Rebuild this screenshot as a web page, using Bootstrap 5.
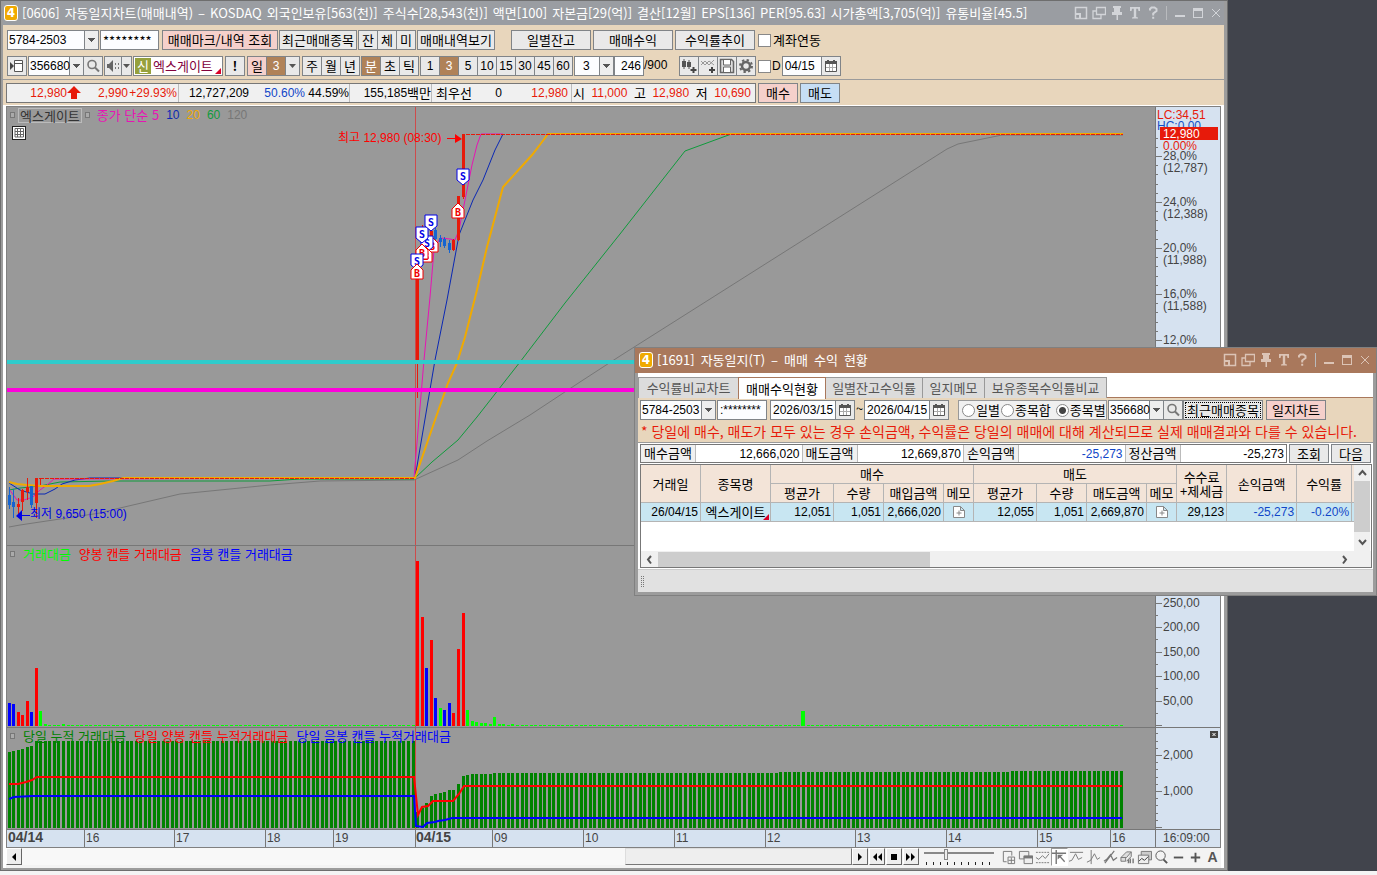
<!DOCTYPE html>
<html lang="ko">
<head>
<meta charset="utf-8">
<meta name="viewport" content="width=device-width, initial-scale=1">
<title>자동일지차트</title>
<link rel="stylesheet" href="https://cdn.jsdelivr.net/npm/bootstrap@5.3.0/dist/css/bootstrap.min.css">
<style>
:root{--beige:#e8d6bc;--line:#808488;--axis:#d6e2f0;--plot:#999;--red:#e71a0a;--blue:#1046c8;--wood:#b08258}
html,body{height:100%}
body{margin:0;overflow:hidden;background:#41444c;color:#000;font:13px/18px "Noto Sans CJK KR",sans-serif;border-bottom:4px solid #f4f4f4}
.desk{height:100%}
.main-win{height:100%;width:calc(100% - 149px);background:#fff;border:3px solid #9c9c9c;border-right-width:4px;border-top:1px solid #6b6b6b;outline:1px solid #6e6e6e;outline-offset:-1px}
.title-bar{height:24px;background:#9a9da2;color:#fff;line-height:24px;white-space:nowrap;flex:none}
.title-text{gap:5px;margin-left:4px}
.brand{width:14px;height:16px;border:1px solid #fff;border-radius:3px;background:#f0aa00;color:#fff;font:bold 12px/14px "DejaVu Sans",sans-serif;text-align:center}
.win-btns{margin-right:-1px}
.win-btn{width:18px;height:22px;padding:0;border:0;background:none;color:#d2d4d8;display:flex;align-items:center;justify-content:center}
.win-btn svg{width:14px;height:14px}
.win-sep{width:1px;height:14px;background:#b9bbbe;margin:0 4px}
.tools{background:var(--beige);height:54px;padding:5px 0 0 4px;flex:none;white-space:nowrap}
.tool-row+.tool-row{margin-top:6px}
.ui,.btn.ui{height:20px;padding:0;border:1px solid var(--line);border-radius:0;background:#e9e9e9;color:#000;font:inherit;line-height:18px;text-align:center;display:block;flex:none}
.num,.ui.num,.btn.ui.num{font-family:"Liberation Sans","Noto Sans CJK KR",sans-serif;font-size:12px}
.btn.ui svg{display:block;margin:auto}
.btn.ui.pink{background:#f5d0cb}
.btn.ui.sky{background:#c6def5}
.btn.ui.wood{background:var(--wood);color:#fff}
.btn.ui.focused{outline:1px dotted #000;outline-offset:-3px}
.ui.field{background:#fcfdff;text-align:left;padding:0 2px}
input.ui.right{text-align:right}
select.ui.field{appearance:none;background:#fcfdff url("data:image/svg+xml,%3Csvg xmlns='http://www.w3.org/2000/svg' width='14' height='18'%3E%3Cpath d='M0 0h14v18H0z' fill='%23eee'/%3E%3Cpath d='M0 0h1v18H0z' fill='%23808488'/%3E%3Cpath d='M4 7h7v1h-1v1H9v1H8v1H7v-1H6V9H5V8H4z' fill='%23555'/%3E%3C/svg%3E") no-repeat right top;padding:0 12px 0 1px}
select.ui.lead-in{padding-left:8px}
.grp{display:flex}
.grp>*+*{margin-left:-1px}
.w11{width:11px}.w15{width:15px}.w18{width:18px}.w20{width:20px}.w30{width:30px}.w34{width:34px}.w40{width:40px}.w47{width:47px}.w49{width:49px}.w50{width:50px}.w56{width:56px}.w59{width:59px}.w60{width:60px}.w66{width:66px}.w70{width:70px}.w76{width:76px}.w78{width:78px}.w80{width:80px}.w90{width:90px}.w92{width:92px}.w116{width:116px}
.g1{gap:1px}.g2{gap:2px}.g3{gap:3px}.far{margin-left:13px}.near{margin-left:1px}
.tick{appearance:none;width:13px;height:13px;margin:0;border:1px solid #888;background:#fff;flex:none}
.tick.round{border-radius:50%}
.tick.round:checked{background:radial-gradient(circle,#444 0 3px,#fff 4px)}
.new-tag{background:#96a03c;color:#fff;width:16px;height:16px;line-height:16px;margin:1px 2px 0 0}
.ui.stock{color:#82003c;background:#fff;position:relative;text-align:left;padding-left:1px}
.corner{position:absolute;right:1px;bottom:1px;border:3px solid transparent;border-right-color:#d80028;border-bottom-color:#d80028}
.quotes{background:var(--beige);border-top:1px solid #9b9b9b;height:26px;padding:3px 0 0 3px;flex:none}
.quote-bar{width:750px;height:20px;border:1px solid #777;background:#f0f0f0;white-space:nowrap}
.quote-bar>div{display:flex;border-right:1px solid #bbb;flex:none}
.quote-bar>div:last-child{border:0}
.q1{width:172px}.q2{width:171px}.q3{width:82px}.q4{width:140px}.q5{width:183px}
.red{color:var(--red)}.blue{color:var(--blue)}
.chart{margin:1px 3px 0 3px;border:1px solid #808080;background:var(--plot);min-height:0}
.pane{display:flex;min-height:0;border-bottom:1px solid #777;position:relative}
.pane svg{display:block;height:100%}
.plot{flex:1 1 0;min-width:0;width:0}
.scale{width:65px;flex:none;background:var(--axis)}
.p-price{flex:438 1 0}.p-vol{flex:181 1 0}.p-sum{flex:101 1 0}
.times{height:17px;flex:none;border:0}
.times svg{background:var(--axis)}
.legends{position:absolute;left:3px;top:0;line-height:16px;white-space:nowrap;display:flex;align-items:center;gap:8px}
.legends.tight{gap:3px}
.knob{width:5px;height:6px;border:1px solid #777;background:#aaa}
.tagbox{border:1px solid #bbb;color:#333;line-height:13px;padding:0 1px;height:15px}
.ma5{color:#e614b4}.ma10{color:#0a28b4}.ma20{color:#f0aa00}.ma60{color:#0f9b3c}.ma120{color:#777}
.lime{color:#0f0}.up{color:red}.down{color:#00f}.total{color:#008200}
.pane svg text{font-family:"Liberation Sans","Noto Sans CJK KR",sans-serif;font-size:12px}
.pane svg text.day{font-size:14px;font-weight:bold}
.pane svg text.pin{font:bold 10px "DejaVu Sans Mono",monospace}
.bars-foot{height:20px;margin:0 3px;flex:none;background:#f3f3f3}
.sq{width:16px;height:17px;padding:0;border:1px solid #fff;border-right-color:#666;border-bottom-color:#666;background:#eee;flex:none;display:flex;align-items:center;justify-content:center}
.track{background:#f8f8f8;height:17px}
.thumb{width:227px;height:17px;background:#eee;border:1px solid #ddd;border-right-color:#777;border-bottom-color:#777}
.zoomer{appearance:none;width:70px;height:18px;margin:0 6px 0 5px;background:linear-gradient(#888,#888) 0 4px/100% 2px no-repeat,repeating-linear-gradient(90deg,#222 0 1px,transparent 1px 7px) 2px 14px/100% 3px no-repeat}
.zoomer::-webkit-slider-thumb{appearance:none;width:4px;height:11px;background:#eee;border:1px solid #888;margin-top:-6px}
.foot-ic{width:17px;height:18px;padding:0;border:0;background:none;color:#777;display:flex;align-items:center;justify-content:center;flex:none}
.foot-ic svg{width:15px;height:15px;flex:none}
.foot-ic.on{background:#fff;border:1px solid #999;border-right-color:#fff;border-bottom-color:#fff}
.foot-ic.letter{color:#555;font:bold 14px "Liberation Sans",sans-serif}
.sub-win{position:absolute;left:634px;right:0;top:347px;background:#fff;border:4px solid #9c9c9c;border-top:0;outline:1px solid #808080;outline-offset:-1px}
.sub-win .title-bar{background:#a9785c;height:26px;line-height:26px;margin:0 -4px;padding:0 4px 0 5px}
.sub-win .title-text{gap:6px}
.sub-win .win-btn{color:#dcc4b6}
.tabs-row{padding:4px 0 0 1px;border-bottom:1px solid #a9785c;height:25px}
.tab-b{height:21px;border:1px solid #999;border-bottom:0;background:#dcdcdc;color:#555;padding:0;margin-left:-1px;line-height:18px}
.tab-b.on{background:#fff;color:#000;border-color:#a9785c;height:22px;z-index:1}
.t1{width:101px}.t2{width:88px}.t3{width:98px}.t4{width:63px}.t5{width:123px}
.filter{background:var(--beige);padding:2px 0 0 2px;height:45px;border-bottom:1px solid #999;white-space:nowrap}
.tilde{width:9px;text-align:center}
.notice{font-size:14px;line-height:22px;color:var(--red);padding-left:1px}
.radios{width:149px;height:20px;border:1px solid #999;background:#f0f0f0;padding-left:3px;margin:0 1px 0 9px}
.sums{padding:1px 2px 0 2px;gap:2px}
.sum-box{border:1px solid #777;height:19px;line-height:16px;white-space:nowrap;flex:1 1 0}
.sum-box dt{font-weight:400;width:55px;background:#f0f0f0;border-right:1px solid #bbb;text-align:center;flex:none}
.sum-box dd{margin:0;flex:1 1 0;text-align:right;padding-right:2px;border-right:1px solid #bbb;line-height:18px}
.sum-box dd:last-child{border:0}
.sums .btn.ui{height:19px;line-height:16px}
.grid-box{margin:1px 1px 0 2px;border:1px solid #777}
.deal{table-layout:fixed;width:714px;border-collapse:separate;border-spacing:0;line-height:14px;white-space:nowrap}
.deal th,.deal td{border:1px solid #b4b4b4;border-top:0;border-left:0;padding:0 2px;height:19px;overflow:hidden}
.deal th{background:#f3e4d8;font-weight:400;text-align:center}
.deal td{background:#c8e6f2;text-align:right;position:relative}
.deal td.named{font:13px/14px "Noto Sans CJK KR",sans-serif}
.deal td.named,.deal td.mid{text-align:center}
.deal svg{display:block;margin:auto}
.blank{height:29px}
.sb{background:#f0f0f0;color:#555}
.sb-v{width:16px;flex:none;margin-right:1px}
.sb-v i{display:block;height:51px;background:#cdcdcd}
.sb-h{height:16px}
.sb-h i{width:272px;height:15px;background:#cdcdcd}
.sb-h .end{margin:0 18px 0 auto}
.status{background:#e1e1e1;border-top:1px solid #ccc;height:23px;margin-top:1px}
.grip{width:4px;height:12px;margin:5px 0 0 3px;background:repeating-linear-gradient(#e1e1e1 0 1px,transparent 1px 2px),repeating-linear-gradient(90deg,#777 0 1px,#e1e1e1 1px 2px)}
</style>
</head>
<body>
<svg class="d-none" aria-hidden="true">
 <symbol id="i-dock" viewBox="0 0 14 14"><path d="M1.500 1.500h11v11h-11z" fill="none" stroke="currentColor" stroke-width="1.500"/><path d="M1 7h6v6H5V9H1z" fill="currentColor"/></symbol>
 <symbol id="i-dup" viewBox="0 0 14 14"><path d="M4.500 1.500h9v7h-9zM4 5H1v7.500h8V9" fill="none" stroke="currentColor" stroke-width="1.300"/></symbol>
 <symbol id="i-pin" viewBox="0 0 14 14"><path d="M3 0h8v2h-1v4h2v3H8v5H6.500V9H2V6h2V2H3z" fill="currentColor"/></symbol>
 <symbol id="i-t" viewBox="0 0 14 14"><path d="M2 1h10v4h-1.500L10 2.800H8.200V11l1.800.6V12.500H4v-.9l1.800-.6V2.800H4L3.500 5H2z" fill="currentColor"/></symbol>
 <symbol id="i-q" viewBox="0 0 14 14"><path d="M4 4.500V3l1.500-1.500h3L10.500 3v2L7.200 7.500v2M7.200 10.800v2" fill="none" stroke="currentColor" stroke-width="2"/></symbol>
 <symbol id="i-min" viewBox="0 0 14 14"><path d="M2 9h10v2H2z" fill="currentColor"/></symbol>
 <symbol id="i-max" viewBox="0 0 14 14"><path d="M2 2h10v10H2zm1 3v6h8V5z" fill="currentColor" fill-rule="evenodd"/></symbol>
 <symbol id="i-x" viewBox="0 0 14 14"><path d="M3 3l8 8M11 3l-8 8" stroke="currentColor"/></symbol>
 <symbol id="i-mag" viewBox="0 0 14 14"><circle cx="6" cy="5.500" r="4" fill="none" stroke="#777" stroke-width="1.600"/><path d="M9 8.500l4 4" stroke="#777" stroke-width="2"/></symbol>
 <symbol id="i-cal" viewBox="0 0 12 12"><path d="M.5 1.500h11v10H.5z" fill="#fff" stroke="#555"/><path d="M1 7.500h10M4.500 4v7M7.500 4v7" stroke="#aaa"/><path d="M0 1h12v3H0zM2 0h2v2H2zM8 0h2v2H8z" fill="#555"/></symbol>
 <symbol id="i-note" viewBox="0 0 12 12"><path d="M.5.500h7l4 4v7H.5zM7.500.500v4h4" fill="#fff" stroke="#888"/><path d="M6 4.500v5M3.500 7h5" stroke="#888"/></symbol>
 <symbol id="i-drop" viewBox="0 0 7 4"><path d="M0 0h7L3.500 4z" fill="#555"/></symbol>
</svg>

<div class="desk position-relative">
<main class="main-win d-flex flex-column">
 <header class="title-bar d-flex align-items-center">
  <span class="brand near flex-shrink-0">4</span>
  <span class="title-text d-flex"><span>[0606]</span><span>자동일지차트(매매내역)</span><span>–</span><span>KOSDAQ</span><span>외국인보유[563(천)]</span><span>주식수[28,543(천)]</span><span>액면[100]</span><span>자본금[29(억)]</span><span>결산[12월]</span><span>EPS[136]</span><span>PER[95.63]</span><span>시가총액[3,705(억)]</span><span>유통비율[45.5]</span></span>
  <div class="win-btns d-flex align-items-center ms-auto">
   <button class="win-btn" aria-label="도킹"><svg><use href="#i-dock"/></svg></button><button class="win-btn" aria-label="복제"><svg><use href="#i-dup"/></svg></button><button class="win-btn" aria-label="고정"><svg><use href="#i-pin"/></svg></button><button class="win-btn" aria-label="글꼴"><svg><use href="#i-t"/></svg></button><button class="win-btn" aria-label="도움말"><svg><use href="#i-q"/></svg></button><span class="win-sep"></span><button class="win-btn" aria-label="최소화"><svg><use href="#i-min"/></svg></button><button class="win-btn" aria-label="최대화"><svg><use href="#i-max"/></svg></button><button class="win-btn" aria-label="닫기"><svg><use href="#i-x"/></svg></button>
  </div>
 </header>

 <section class="tools">
  <div class="tool-row d-flex g3">
   <div class="d-flex g1"><select class="ui field num w92" aria-label="계좌"><option>5784-2503</option></select><input class="ui field w59" aria-label="비밀번호" value="********"></div>
   <div class="d-flex g1"><button class="btn ui pink w116">매매마크/내역 조회</button><button class="btn ui w78">최근매매종목</button>
    <div class="grp"><button class="btn ui w20">잔</button><button class="btn ui w20">체</button><button class="btn ui w20">미</button></div>
    <button class="btn ui w78">매매내역보기</button></div>
   <div class="d-flex g2 far"><button class="btn ui w80">일별잔고</button><button class="btn ui w80">매매수익</button><button class="btn ui w80">수익률추이</button></div>
   <label class="d-flex align-items-center g2"><input type="checkbox" class="tick">계좌연동</label>
  </div>
  <div class="tool-row d-flex g1">
   <button class="btn ui w20" aria-label="목록"><svg width="14" height="14"><path d="M4.500 1.500h8v11h-8zM4.500 4.500h8" fill="#fff" stroke="#555"/><path d="M0 3l4 4-4 4z" fill="#444"/></svg></button>
   <div class="grp"><select class="ui field num w56" aria-label="종목코드"><option>356680</option></select><button class="btn ui w20" aria-label="검색"><svg width="14" height="14"><use href="#i-mag"/></svg></button></div>
   <div class="grp"><button class="btn ui w18" aria-label="소리"><svg width="14" height="12"><path d="M1 4h2l4-4v12L3 8H1z" fill="#666"/><path d="M9 3h1v2H9zM9 7h1v2H9zM12 3h1v2h-1zM12 7h1v2h-1z" fill="#777"/></svg></button><button class="btn ui w11" aria-label="소리 메뉴"><svg width="7" height="4"><use href="#i-drop"/></svg></button></div>
   <div class="ui stock w90 d-flex"><span class="new-tag text-center">신</span>엑스게이트<span class="corner"></span></div>
   <button class="btn ui near w20"><b>!</b></button>
   <div class="grp near"><button class="btn ui pink w20">일</button><button class="btn ui wood num w20">3</button><button class="btn ui w15" aria-label="주기 메뉴"><svg width="7" height="4"><use href="#i-drop"/></svg></button></div>
   <div class="grp near"><button class="btn ui w20">주</button><button class="btn ui w20">월</button><button class="btn ui w20">년</button></div>
   <div class="grp"><button class="btn ui wood w20">분</button><button class="btn ui w20">초</button><button class="btn ui w20">틱</button></div>
   <div class="grp num"><button class="btn ui w20">1</button><button class="btn ui wood w20">3</button><button class="btn ui w20">5</button><button class="btn ui w20">10</button><button class="btn ui w20">15</button><button class="btn ui w20">30</button><button class="btn ui w20">45</button><button class="btn ui w20">60</button></div>
   <div class="d-flex num"><select class="ui field num lead-in w40" aria-label="분"><option>3</option></select><input class="ui field num right w30" aria-label="개수" value="246"><span class="w34">/900</span></div>
   <div class="grp">
    <button class="btn ui w20" aria-label="봉 추가"><svg width="16" height="16"><path d="M1 3h4v6H1zM6 4h4v5H6z" fill="#555"/><path d="M3 1v10M8 2v9" stroke="#555"/><path d="M12.500 9v6M9.500 12h6" stroke="#444" stroke-width="2"/></svg></button>
    <button class="btn ui w20" aria-label="지표 추가"><svg width="16" height="16"><path d="M1 7l4-4 4 4 5-5M1 3l4 4 4-4 5 4" stroke="#999" fill="none"/><path d="M12 9v6M9 12h6" stroke="#444" stroke-width="2"/></svg></button>
    <button class="btn ui w20" aria-label="저장"><svg width="16" height="16"><path d="M1.500 1.500h11l2 2v11h-13z" fill="#ddd" stroke="#666" stroke-width="1.500"/><path d="M4.500 2v5h7V2M4.500 14v-5h7v5" fill="#fff" stroke="#666"/></svg></button>
    <button class="btn ui w20" aria-label="설정"><svg width="16" height="16"><circle cx="8" cy="8" r="4" fill="none" stroke="#666" stroke-width="2.500"/><circle cx="8" cy="8" r="6" fill="none" stroke="#666" stroke-width="2" stroke-dasharray="2.350 2.350"/></svg></button>
   </div>
   <label class="d-flex align-items-center g1 near num"><input type="checkbox" class="tick">D</label>
   <div class="grp"><input class="ui field num w40" aria-label="날짜" value="04/15"><button class="btn ui w20" aria-label="달력"><svg width="12" height="12"><use href="#i-cal"/></svg></button></div>
  </div>
 </section>

 <section class="quotes d-flex g2">
  <div class="quote-bar d-flex flex-shrink-0">
   <div class="q1 text-end red num"><span class="w60">12,980</span><svg width="14" height="14" class="my-auto"><path d="M7 0l7 7h-4v6H4V7H0z" fill="#e71a0a"/></svg><span class="w47">2,990</span><span class="w49">+29.93%</span></div>
   <div class="q2 text-end num"><span class="w70">12,727,209</span><span class="w56 blue">50.60%</span><span class="flex-grow-1">44.59%</span></div>
   <div class="q3 justify-content-end"><span class="num">155,185</span>백만</div>
   <div class="q4 text-end"><span class="w40">최우선</span><span class="w30 num">0</span><span class="w66 num red">12,980</span></div>
   <div class="q5 justify-content-between pe-1"><span class="near">시</span><span class="num red">11,000</span><span>고</span><span class="num red">12,980</span><span>저</span><span class="num red">10,690</span></div>
  </div>
  <button class="btn ui pink w40">매수</button><button class="btn ui sky w40">매도</button>
 </section>

 <section class="chart d-flex flex-column flex-grow-1">
  <div class="pane p-price">
   <svg class="plot" id="price" viewBox="7 107 1148 438" preserveAspectRatio="none"></svg>
   <svg class="scale" id="price-scale" viewBox="1155 107 65 438" preserveAspectRatio="none"></svg>
   <div class="legends tight"><span class="knob"></span><span class="tagbox">엑스게이트</span><span class="knob"></span><span class="ms-1 ma5">종가 단순 5</span><span class="ms-1 num ma10">10</span><span class="ms-1 num ma20">20</span><span class="ms-1 num ma60">60</span><span class="ms-1 num ma120">120</span></div>
  </div>
  <div class="pane p-vol">
   <svg class="plot" id="vol" viewBox="7 546 1148 181" preserveAspectRatio="none"></svg>
   <svg class="scale" id="vol-scale" viewBox="1155 546 65 181" preserveAspectRatio="none"></svg>
   <div class="legends"><span class="knob"></span><span class="lime">거래대금</span><span class="up">양봉 캔들 거래대금</span><span class="down">음봉 캔들 거래대금</span></div>
  </div>
  <div class="pane p-sum">
   <svg class="plot" id="sum" viewBox="7 728 1148 101" preserveAspectRatio="none"></svg>
   <svg class="scale" id="sum-scale" viewBox="1155 728 65 101" preserveAspectRatio="none"></svg>
   <div class="legends"><span class="knob"></span><span class="total">당일 누적 거래대금</span><span class="up">당일 양봉 캔들 누적거래대금</span><span class="down">당일 음봉 캔들 누적거래대금</span></div>
  </div>
  <div class="pane times">
   <svg class="plot" id="times" viewBox="7 830 1148 17" preserveAspectRatio="none"></svg>
   <svg class="scale" id="clock" viewBox="1155 830 65 17" preserveAspectRatio="none"></svg>
  </div>
 </section>

 <footer class="bars-foot d-flex">
  <button class="sq" aria-label="왼쪽"><svg width="6" height="8"><path d="M5 0v8L1 4z"/></svg></button>
  <div class="track d-flex justify-content-end flex-grow-1"><div class="thumb"></div></div>
  <div class="d-flex g1">
   <button class="sq" aria-label="오른쪽"><svg width="6" height="8"><path d="M1 0v8l4-4z"/></svg></button>
   <button class="sq" aria-label="빠르게 뒤로"><svg width="10" height="8"><path d="M5 0v8L1 4zM10 0v8L6 4z"/></svg></button>
   <button class="sq" aria-label="정지"><svg width="6" height="6"><path d="M0 0h6v6H0z"/></svg></button>
   <button class="sq" aria-label="빠르게 앞으로"><svg width="10" height="8"><path d="M0 0v8l4-4zM5 0v8l4-4z"/></svg></button>
  </div>
  <input type="range" class="zoomer" aria-label="확대" value="30">
  <div class="d-flex">
   <button class="foot-ic" aria-label="창 추가"><svg viewBox="0 0 16 16"><path d="M6 12.500H2.500v-11h9V6M7.500 7.500h7v7h-7zM11 8v6M8 11h6" fill="none" stroke="currentColor"/></svg></button>
   <button class="foot-ic" aria-label="창 겹침"><svg viewBox="0 0 16 16"><path d="M1.500 1.500h10v8h-10z" fill="#eee" stroke="currentColor"/><path d="M6.500 6.500h9v8h-9z" fill="#eee" stroke="currentColor"/><path d="M6 6h10v3H6z" fill="currentColor"/></svg></button>
   <button class="foot-ic" aria-label="범위"><svg viewBox="0 0 16 16"><path d="M1 2.500h14M1 13.500h14" stroke="currentColor" stroke-dasharray="2 1"/><path d="M1 8l3 2 4-4 3 3 4-5" fill="none" stroke="currentColor"/></svg></button>
   <button class="foot-ic on" aria-label="선택"><svg viewBox="0 0 16 16"><path d="M4.500 0v15M0 3.500h15" stroke="currentColor" stroke-width="1.500"/><path d="M6 5h6L9.500 7l4.500 5-1 1-4.500-5L6 10z" fill="currentColor"/></svg></button>
   <button class="foot-ic" aria-label="수평선"><svg viewBox="0 0 16 16"><path d="M1 2.500h14M0 12l3-1 4-7 3 6 4-2" stroke="currentColor" fill="none"/></svg></button>
   <button class="foot-ic" aria-label="수직선"><svg viewBox="0 0 16 16"><path d="M5.500 0v15M1 13l4-2 4-7 3 6 3-2" stroke="currentColor" fill="none"/></svg></button>
   <button class="foot-ic" aria-label="추세선"><svg viewBox="0 0 16 16"><path d="M2 14L12 1M1 12l3-2 4-5 3 6 4-3" stroke="currentColor" fill="none" stroke-width="1.300"/></svg></button>
   <button class="foot-ic" aria-label="지우개"><svg viewBox="0 0 16 16"><path d="M1 8l6-6h5l-5 6zM1 8v4h5V8M7 12l5-5V2" fill="#ddd" stroke="currentColor"/><path d="M9 10v4M11 9v5M14 9v5" stroke="currentColor" stroke-width="1.500"/></svg></button>
   <button class="foot-ic" aria-label="차트 복사"><svg viewBox="0 0 16 16"><path d="M4.500 1.500h11v9h-11z" fill="#ccc" stroke="currentColor"/><path d="M1.500 5.500h11v9h-11z" fill="#eee" stroke="currentColor"/><path d="M2 12l3-3 3 2 4-4" stroke="#333" fill="none"/></svg></button>
   <button class="foot-ic" aria-label="돋보기"><svg viewBox="0 0 16 16"><circle cx="7" cy="6" r="5" fill="none" stroke="#555"/><path d="M10 10l4 4" stroke="#555" stroke-width="2"/></svg></button>
   <button class="foot-ic" aria-label="축소"><svg viewBox="0 0 16 16"><path d="M3 7h10v2H3z" fill="#555"/></svg></button>
   <button class="foot-ic" aria-label="확대"><svg viewBox="0 0 16 16"><path d="M3 7h4V3h2v4h4v2H9v4H7V9H3z" fill="#555"/></svg></button>
   <button class="foot-ic letter">A</button>
  </div>
 </footer>
</main>

<section class="sub-win">
 <header class="title-bar d-flex align-items-center">
  <span class="brand flex-shrink-0">4</span>
  <span class="title-text d-flex"><span>[1691]</span><span>자동일지(T)</span><span>–</span><span>매매</span><span>수익</span><span>현황</span></span>
  <div class="win-btns d-flex align-items-center ms-auto">
   <button class="win-btn" aria-label="도킹"><svg><use href="#i-dock"/></svg></button><button class="win-btn" aria-label="복제"><svg><use href="#i-dup"/></svg></button><button class="win-btn" aria-label="고정"><svg><use href="#i-pin"/></svg></button><button class="win-btn" aria-label="글꼴"><svg><use href="#i-t"/></svg></button><button class="win-btn" aria-label="도움말"><svg><use href="#i-q"/></svg></button><span class="win-sep"></span><button class="win-btn" aria-label="최소화"><svg><use href="#i-min"/></svg></button><button class="win-btn" aria-label="최대화"><svg><use href="#i-max"/></svg></button><button class="win-btn" aria-label="닫기"><svg><use href="#i-x"/></svg></button>
  </div>
 </header>
 <nav class="tabs-row d-flex"><button class="tab-b t1">수익률비교차트</button><button class="tab-b on t2">매매수익현황</button><button class="tab-b t3">일별잔고수익률</button><button class="tab-b t4">일지메모</button><button class="tab-b t5">보유종목수익률비교</button></nav>
 <div class="filter">
  <div class="d-flex">
   <select class="ui field num w76" aria-label="계좌번호"><option>5784-2503</option></select>
   <div class="d-flex g3">
    <input class="ui field num near w50" aria-label="계좌 비밀번호" value=":********">
    <div class="grp"><input class="ui field num w66" aria-label="시작일" value="2026/03/15"><button class="btn ui w20" aria-label="시작일 달력"><svg width="12" height="12"><use href="#i-cal"/></svg></button></div>
   </div>
   <span class="tilde">~</span>
   <div class="grp"><input class="ui field num w66" aria-label="종료일" value="2026/04/15"><button class="btn ui w20" aria-label="종료일 달력"><svg width="12" height="12"><use href="#i-cal"/></svg></button></div>
   <div class="radios d-flex align-items-center g1"><input type="radio" class="tick round" name="k" id="k1"><label for="k1">일별</label><input type="radio" class="tick round" name="k" id="k2"><label for="k2">종목합</label><input type="radio" class="tick round ms-1" name="k" id="k3" checked><label for="k3">종목별</label></div>
   <div class="grp"><select class="ui field num w56" aria-label="종목"><option>356680</option></select><button class="btn ui w20" aria-label="종목 검색"><svg width="14" height="14"><use href="#i-mag"/></svg></button></div>
   <div class="d-flex g3"><button class="btn ui focused w80">최근매매종목</button><button class="btn ui pink w60">일지차트</button></div>
  </div>
  <div class="notice">* 당일에 매수, 매도가 모두 있는 경우 손익금액, 수익률은 당일의 매매에 대해 계산되므로 실제 매매결과와 다를 수 있습니다.</div>
 </div>
 <div class="sums d-flex">
  <dl class="sum-box d-flex m-0"><dt>매수금액</dt><dd class="num">12,666,020</dd><dt>매도금액</dt><dd class="num">12,669,870</dd><dt>손익금액</dt><dd class="num blue">-25,273</dd><dt>정산금액</dt><dd class="num">-25,273</dd></dl>
  <button class="btn ui w40">조회</button><button class="btn ui w40">다음</button>
 </div>
 <div class="grid-box">
  <div class="d-flex">
   <div class="flex-grow-1 overflow-hidden" style="width:0">
    <table class="deal">
     <colgroup><col width="60"><col width="70"><col width="63"><col width="50"><col width="60"><col width="30"><col width="63"><col width="50"><col width="60"><col width="30"><col width="50"><col width="70"><col width="55"><col width="3"></colgroup>
     <thead>
      <tr><th rowspan="2">거래일</th><th rowspan="2">종목명</th><th colspan="4">매수</th><th colspan="4">매도</th><th rowspan="2">수수료<br>+제세금</th><th rowspan="2">손익금액</th><th rowspan="2">수익률</th><th rowspan="2"></th></tr>
      <tr><th>평균가</th><th>수량</th><th>매입금액</th><th>메모</th><th>평균가</th><th>수량</th><th>매도금액</th><th>메모</th></tr>
     </thead>
     <tbody><tr class="num"><td>26/04/15</td><td class="named">엑스게이트<span class="corner"></span></td><td>12,051</td><td>1,051</td><td>2,666,020</td><td class="mid"><svg width="12" height="12"><use href="#i-note"/></svg></td><td>12,055</td><td>1,051</td><td>2,669,870</td><td class="mid"><svg width="12" height="12"><use href="#i-note"/></svg></td><td>29,123</td><td class="blue">-25,273</td><td class="blue">-0.20%</td><td></td></tr></tbody>
    </table>
    <div class="blank"></div>
   </div>
   <div class="sb sb-v d-flex flex-column align-items-center"><svg width="15" height="16"><path d="M4 10l3.500-4L11 10" fill="none" stroke="#555" stroke-width="2"/></svg><i class="w-100"></i><svg width="15" height="18"><path d="M4 8l3.500 4L11 8" fill="none" stroke="#555" stroke-width="2"/></svg></div>
  </div>
  <div class="sb sb-h d-flex align-items-center"><svg width="17" height="15"><path d="M10 4L7 7.500l3 4" fill="none" stroke="#555" stroke-width="2"/></svg><i></i><svg class="end" width="17" height="15"><path d="M7 4l3 3.500-3 4" fill="none" stroke="#555" stroke-width="2"/></svg></div>
 </div>
 <div class="status d-flex"><span class="grip"></span></div>
</section>
</div>

<script>
const bx = i => Math.floor(8 + 4.54 * i);
const R = '#e71a0a', B = '#1464d2';
const rect = (x, y, w, h, f) => `<rect x="${x}" y="${y}" width="${w}" height="${h}" fill="${f}" shape-rendering="crispEdges"/>`;
const line = (pts, c, w = 1, extra = '') => `<polyline points="${pts}" fill="none" stroke="${c}" stroke-width="${w}" ${extra}/>`;
const text = (x, y, t, c, extra = '') => `<text x="${x}" y="${y}" fill="${c}" ${extra}>${t}</text>`;
const put = (id, s) => document.getElementById(id).innerHTML = s;

/* price pane: averages, candles, trade markers */
// index, body top, body bottom, wick top, wick bottom, colour
const candles = [[0,495,505,487,509,B],[1,502,507,489,518,B],[2,504,507,498,515,R],[3,490,502,489,511,R],[4,487,492,478,500,R],[5,486,505,486,508,B],[6,478,503,478,518,R],[7,478,479,478,485,R],
 [90,262,360,260,398,R],[91,240,250,225,258,R],[93,231,236,229,240,R],[94,230,239,228,242,B],[95,238,242,235,247,B],[96,239,246,237,248,B],[97,243,250,240,253,B],[98,240,250,239,251,R],[99,196,240,196,241,R],[100,134,197,134,199,R]];
const mark = (k, x, y) => {
  const c = k === 'S' ? '#0000e6' : '#f00000';
  const d = k === 'S' ? `M${x-6} ${y-7}h12v11l-6 5-6-5z` : `M${x-6} ${y+6}h12v-9l-6-6-6 6z`;
  return `<path d="${d}" fill="#fff" stroke="${c}"/>` + text(x, y + 4, k, c, 'class="pin" text-anchor="middle"');
};
let p = rect(415,107,1,438,'#cd4b4b');
p += line('9,527 20,525 60,519 100,513 120,508 150,501 180,494 230,489 270,485 320,481 414,480 458,460 487,441 530,415 580,382 620,356 947,149 958,144 1002,135 1123,135','#777');
p += line('9,490 20,488 40,486 60,482 110,481 270,481 300,479 414,479 432,462 458,440 477,417 520,362 565,303 620,234 685,151 730,134.500','#0f9b3c');
p += line('9,483 20,490 33,494 45,494 55,489 62,484 75,480 90,478 415,478 435,360 447,300 459,235 473,200 483,180 495,150 503,134','#0a28b4');
p += line('9,489 17,500 24,500 33,497 40,490 47,485 54,479 414,478 424,360 430,297 434,250 440,238 450,239 455,240 459,230 465,200 472,165 477,145 481,134 503,134','#e614b4');
p += line('9,482 17,484 27,485 40,486 89,486 100,484 113,481 123,478 415,478 435,420 448,383 457,363 465,337 477,290 487,247 495,217 503,187 532,155 542,142 548,134 1123,134','#f0aa00',2);
p += line('40,478.500 415,478.500','#e71a0a',1,'stroke-dasharray="4 1"') + line('466,134.500 1123,134.500','#e71a0a',1,'stroke-dasharray="4 1"');
candles.forEach(([i,t,b,wt,wb,c]) => p += rect(bx(i)+1,wt,1,wb-wt,c) + rect(bx(i),t,3,b-t,c));
p += rect(7,360,1148,4,'#2fcccc') + rect(7,388,1148,4,'#ff00dc');
[['B',432,246],['S',427,243],['B',426,256],['B',422,253],['S',422,234],['S',431,222],['S',417,261],['B',417,273],['B',458,212],['S',463,176]].forEach(m => p += mark(...m));
p += text(338,142,'최고 12,980 (08:30)','red') + '<path d="M447 138h8v-4l7 5-7 4v-4h-8z" fill="red"/>';
p += text(30,518,'최저 9,650 (15:00)','#0000e6') + '<path d="M30 515h-8v-5l-6 6 6 5v-5h8z" fill="#0000e6"/>';
p += rect(12,126,14,14,'#222') + rect(13,127,12,12,'#fff') + '<path d="M15 128.500h8.500v8.500H15zM15 131.500h8M15 134.500h8M17.500 129v8M20.500 129v8" fill="none" stroke="#666"/>';
put('price', p);

let s = rect(1155,107,1,438,'#777');
for (let k = -2; k < 42; k++) { const y = Math.round(156 + k * 9.2); s += rect(1156, y, k % 5 === 0 ? 6 : 2, 1, '#777'); }
s += text(1157,119,'LC:34,51',R) + text(1157,130,'HC:0,00','#1450c8');
['28,0%|(12,787)','24,0%|(12,388)','20,0%|(11,988)','16,0%|(11,588)','12,0%|(11,188)'].forEach((v, n) => { const [a, b] = v.split('|'); s += text(1163,160+n*46,a,'#444') + text(1163,172+n*46,b,'#444'); });
s += rect(1162,140,40,11,'#d6e2f0') + text(1163,150,'0.00%',R) + rect(1160,127,58,13,R) + text(1163,138,'12,980','#fff');
put('price-scale', s);

/* turnover pane */
const vols = {0:[703,'b'],1:[704,'b'],2:[712,'r'],3:[715,'r'],4:[701,'r'],5:[712,'b'],6:[668,'r'],7:[711,'g'],8:[724,'g'],12:[724,'g'],90:[561,'r'],91:[617,'r'],92:[668,'b'],93:[640,'r'],94:[698,'b'],95:[708,'g'],96:[710,'b'],97:[703,'b'],98:[713,'r'],99:[649,'r'],100:[613,'r'],101:[710,'g'],102:[721,'g'],103:[722,'g'],104:[723,'g'],105:[723,'g'],106:[724,'g'],107:[717,'g'],108:[724,'g'],109:[724,'g'],111:[724,'g'],175:[711,'g']};
const col = {r:'#f00', b:'#00f', g:'#0f0'};
let v = rect(415,546,1,181,'#cd4b4b');
for (let i = 0; i < 246; i++) { const [t, c] = vols[i] || [725, 'g']; v += rect(bx(i) - (i === 175 ? 1 : 0), t, i === 175 ? 4 : 3, 726 - t, col[c]); }
put('vol', v);
s = rect(1155,546,1,181,'#777');
[['250,00',603],['200,00',627],['150,00',652],['100,00',676],['50,00',701]].forEach(([t, y]) => s += rect(1156,y,6,1,'#777') + rect(1156,y+12,2,1,'#777') + text(1163,y+4,t,'#444'));
put('vol-scale', s + rect(1156,725,6,1,'#777'));

/* cumulative pane */
const rise = [752,751,750,749,747,746], day2 = [812,808,803,796,794,793,792,790,790,784,776,775,774,774,774,774,774];
let c = '';
for (let i = 0; i < 246; i++) {
  const t = i < 6 ? rise[i] : i < 90 ? 741 : i < 107 ? day2[i - 90] : i < 170 ? 773 : i < 221 ? 772 : 771;
  c += rect(bx(i), t, 3, 828 - t, '#008200');
}
c += rect(415,728,1,101,'#cd4b4b');
c += line('9,784 18,784 26,782 32,780 37,777 414,777 418,815 422,807 428,806 433,801 453,801 459,794 464,786 1122,786','#f00',2);
c += line('9,799 14,797 32,796 414,796 416,826 423,827 427,823 435,822 438,821 445,820 452,818 1122,818','#00f',2);
put('sum', c);
s = rect(1155,728,1,101,'#777');
for (let k = 0; k < 14; k++) s += rect(1156, Math.round(827 - k * 7.2), k % 5 ? 2 : 6, 1, '#777');
s += text(1163,759,'2,000','#444') + text(1163,795,'1,000','#444') + rect(1210,731,8,7,'#444') + '<path d="M1212.500 733l3 3M1215.500 733l-3 3" stroke="#fff"/>';
put('sum-scale', s);

/* time axis */
let t = '';
[[84,16],[174,17],[265,18],[333,19],[415,0],[492,'09'],[583,10],[674,11],[765,12],[855,13],[946,14],[1037,15],[1110,16]].forEach(([x, h]) => t += rect(x,830,1,17,'#777') + (h ? text(x+2,842,h,'#444') : ''));
put('times', t + text(8,842,'04/14','#444','class="day"') + text(416,842,'04/15','#444','class="day"'));
put('clock', rect(1155,830,1,17,'#777') + text(1163,842,'16:09:00','#444'));
</script>
<script src="https://cdn.jsdelivr.net/npm/bootstrap@5.3.0/dist/js/bootstrap.bundle.min.js"></script>
</body>
</html>
